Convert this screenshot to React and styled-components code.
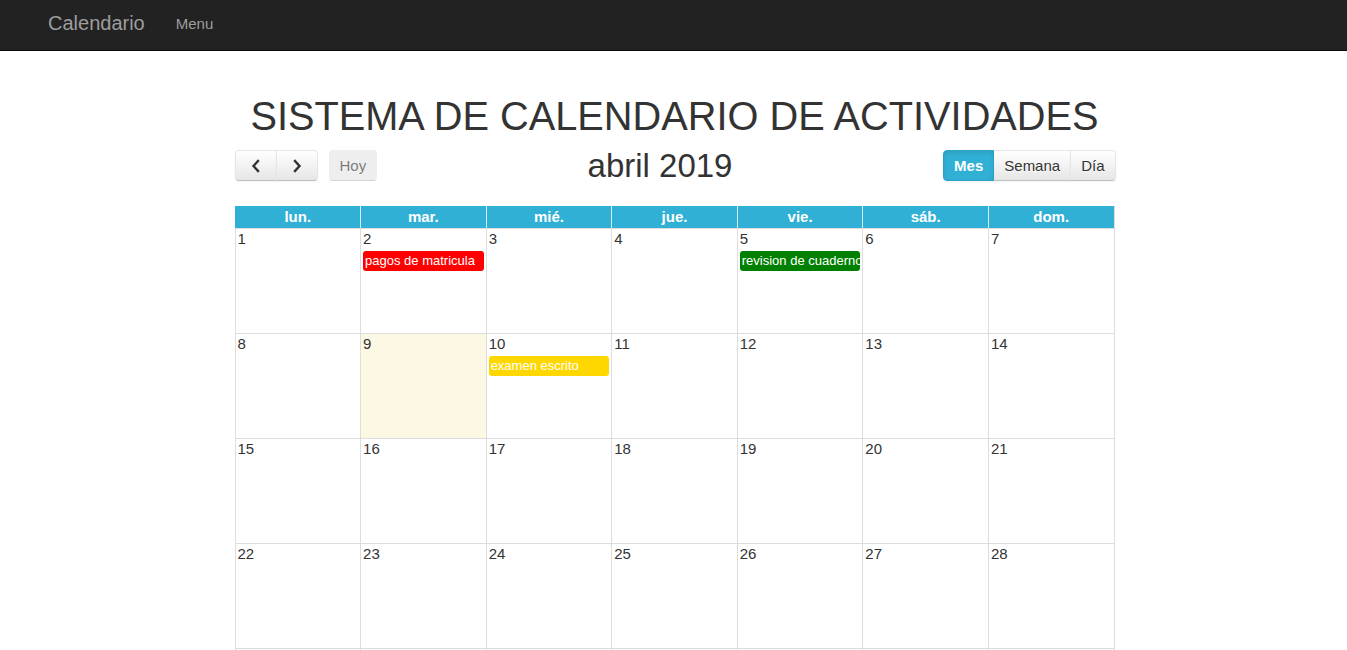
import React from "react";
import styled, { createGlobalStyle, css } from "styled-components";

const GlobalStyle = createGlobalStyle`
	html, body {
		margin: 0;
		padding: 0;
		background: #fff;
		font-family: "Liberation Sans", Arial, sans-serif;
		color: #333;
	}
`;

const Navbar = styled.nav`
	height: 51px;
	background: #222;
	border-bottom: 1px solid #080808;
	display: flex;
	align-items: flex-start;
	padding-left: 48px;
	box-sizing: border-box;
`;

const Brand = styled.a`
	font-size: 20px;
	line-height: 20px;
	padding-top: 13px;
	color: #9d9d9d;
	text-decoration: none;
`;

const NavLink = styled.a`
	font-size: 15px;
	line-height: 20px;
	padding-top: 14px;
	margin-left: 31px;
	color: #9d9d9d;
	text-decoration: none;
`;

const Main = styled.main`
	width: 880px;
	margin: 0 auto;
	padding-top: 44px;
	transform: translateX(1px);
`;

const Title = styled.h1`
	margin: 0;
	font-size: 39.75px;
	line-height: 43px;
	font-weight: 400;
	text-align: center;
	color: #333;
	white-space: nowrap;
`;

const Toolbar = styled.div`
	display: flex;
	align-items: center;
	justify-content: space-between;
	height: 31px;
	margin-top: 12px;
	margin-bottom: 25px;
	position: relative;
`;

const Group = styled.div`
	display: flex;
	align-items: center;
	gap: 11px;
`;

const ButtonGroup = styled.div`
	display: flex;
	margin-right: ${ props => props.right ? "-1px" : "0" };
`;

const Button = styled.button`
	height: 31px;
	padding: 0 10px;
	font-family: "Liberation Sans", Arial, sans-serif;
	font-size: 15px;
	color: #333;
	border: 1px solid;
	border-color: #e6e6e6 #e6e6e6 #bfbfbf;
	background: linear-gradient(to bottom, #fff, #e6e6e6);
	text-shadow: 0 1px 1px rgba(255, 255, 255, 0.75);
	box-shadow: inset 0 1px 0 rgba(255, 255, 255, 0.2), 0 1px 2px rgba(0, 0, 0, 0.05);
	display: flex;
	align-items: center;
	justify-content: center;
	cursor: pointer;
	margin-left: -1px;
	border-radius: 0;

	&:first-child {
		margin-left: 0;
		border-top-left-radius: 4px;
		border-bottom-left-radius: 4px;
	}

	&:last-child {
		border-top-right-radius: 4px;
		border-bottom-right-radius: 4px;
	}

	${ props => props.wide && css`
		width: 42px;
		padding: 0;
	` }

	${ props => props.disabled && css`
		opacity: 0.65;
		box-shadow: none;
		cursor: default;
		background: #e6e6e6;
	` }

	${ props => props.active && css`
		background: #31b0d5;
		border-color: #2aa3c7;
		color: #fff;
		font-weight: 700;
		text-shadow: none;
		box-shadow: inset 0 2px 4px rgba(0, 0, 0, 0.1), 0 1px 2px rgba(0, 0, 0, 0.05);
		position: relative;
		z-index: 1;
	` }
`;

const MonthTitle = styled.h2`
	position: absolute;
	left: 50%;
	transform: translateX(-60%);
	margin: 0;
	font-size: 33px;
	line-height: 31px;
	font-weight: 400;
	color: #333;
`;

const Calendar = styled.div`
	border-right: 1px solid #ddd;
`;

const HeadRow = styled.div`
	display: grid;
	grid-template-columns: repeat(7, 1fr);
	background: #31b0d5;
`;

const HeadCell = styled.div`
	border-left: 1px solid #ddd;
	height: 22px;
	line-height: 21px;
	text-align: center;
	color: #fff;
	font-weight: 700;
	font-size: 15px;
	border-left-color: ${ props => props.first ? "#31b0d5" : "#d6eef6" };
`;

const WeekRow = styled.div`
	display: grid;
	grid-template-columns: repeat(7, 1fr);
	height: 105px;
	box-sizing: border-box;
	border-top: 1px solid #ddd;
`;

const DayCell = styled.div`
	border-left: 1px solid #ddd;
	background: ${ props => props.today ? "#fcf8e3" : "#fff" };
	min-width: 0;
	overflow: hidden;
`;

const DayNumber = styled.div`
	padding: 1px 2px 0;
	font-size: 15px;
	line-height: 18px;
	height: 21px;
	box-sizing: border-box;
	color: ${ props => props.other ? "#bbb" : "#333" };
`;

const Event = styled.div`
	margin: 1px 2px 0;
	padding: 0 2px;
	height: 20px;
	line-height: 19px;
	box-sizing: border-box;
	border-radius: 3px;
	background: ${ props => props.color };
	color: #fff;
	font-size: 13px;
	white-space: nowrap;
	overflow: hidden;
`;

const Chevron = ( { dir } ) => (
	<svg width="10" height="14" viewBox="0 0 10 14" fill="none">
		<polyline
			points={ dir === "left" ? "7,2 2.5,7 7,12" : "3,2 7.5,7 3,12" }
			stroke="#333"
			strokeWidth="2.4"
			strokeLinecap="square"
		/>
	</svg>
);

const days = [ "lun.", "mar.", "mié.", "jue.", "vie.", "sáb.", "dom." ];

const events = {
	2: { title: "pagos de matricula", color: "#ff0000" },
	5: { title: "revision de cuaderno", color: "#008000" },
	10: { title: "examen escrito", color: "#ffd700" },
};

function buildWeeks() {
	const weeks = [];
	let n = 1;
	for ( let w = 0; w < 6; w++ ) {
		const week = [];
		for ( let d = 0; d < 7; d++ ) {
			if ( n <= 30 ) {
				week.push( { day: n, other: false } );
			} else {
				week.push( { day: n - 30, other: true } );
			}
			n++;
		}
		weeks.push( week );
	}
	return weeks;
}

export default function App() {
	const weeks = buildWeeks();

	return <>
		<GlobalStyle />
		<Navbar>
			<Brand href="#">Calendario</Brand>
			<NavLink href="#">Menu</NavLink>
		</Navbar>
		<Main>
			<Title>SISTEMA DE CALENDARIO DE ACTIVIDADES</Title>
			<Toolbar>
				<Group>
					<ButtonGroup>
						<Button wide aria-label="prev"><Chevron dir="left" /></Button>
						<Button wide aria-label="next"><Chevron dir="right" /></Button>
					</ButtonGroup>
					<ButtonGroup>
						<Button disabled>Hoy</Button>
					</ButtonGroup>
				</Group>
				<MonthTitle>abril 2019</MonthTitle>
				<ButtonGroup right>
					<Button active>Mes</Button>
					<Button>Semana</Button>
					<Button>Día</Button>
				</ButtonGroup>
			</Toolbar>
			<Calendar>
				<HeadRow>
					{ days.map( ( d, i ) => <HeadCell key={ d } first={ i === 0 }>{ d }</HeadCell> ) }
				</HeadRow>
				{ weeks.map( ( week, wi ) => (
					<WeekRow key={ wi }>
						{ week.map( cell => {
							const ev = ! cell.other && events[ cell.day ];
							return <DayCell key={ `${ wi }-${ cell.day }` } today={ ! cell.other && cell.day === 9 }>
								<DayNumber other={ cell.other }>{ cell.day }</DayNumber>
								{ ev && <Event color={ ev.color }>{ ev.title }</Event> }
							</DayCell>;
						} ) }
					</WeekRow>
				) ) }
			</Calendar>
		</Main>
	</>;
}
